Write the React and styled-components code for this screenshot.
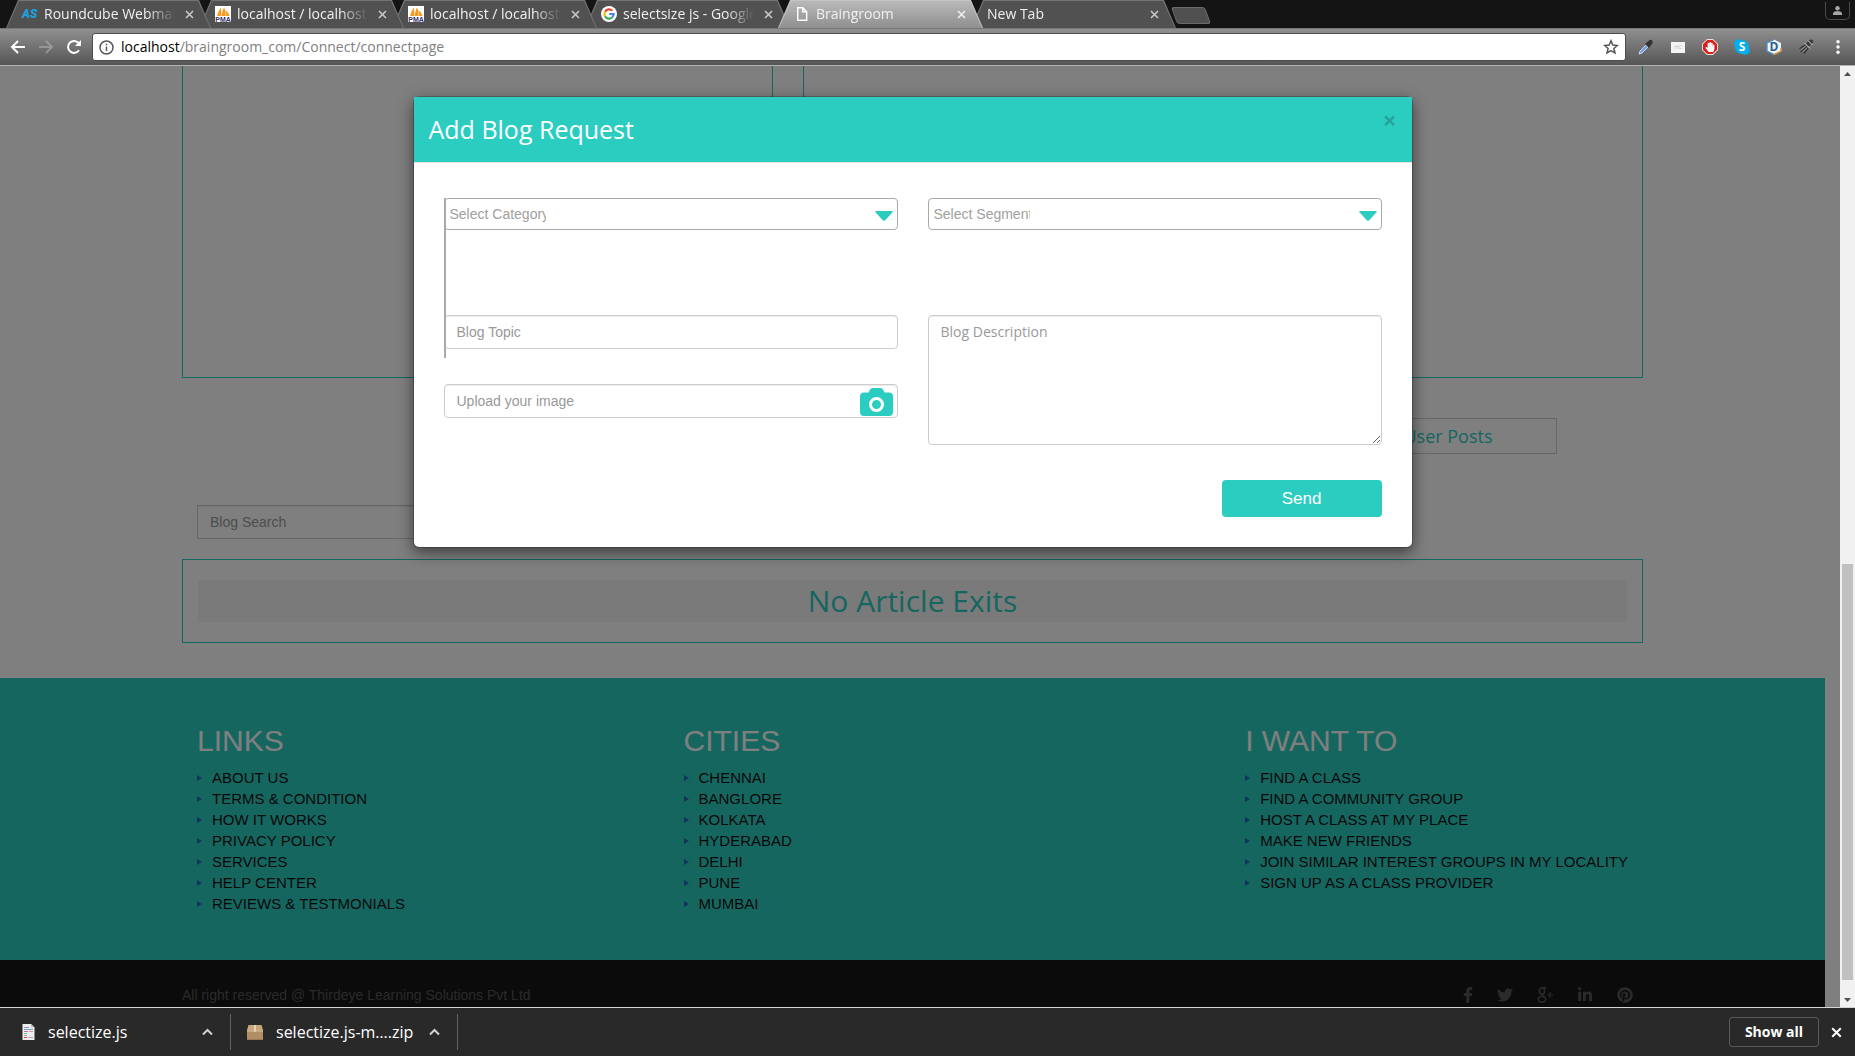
import React from "react";
import styled, { createGlobalStyle, css } from "styled-components";
import { FaFacebookF, FaTwitter, FaLinkedinIn, FaPinterest, FaHandPaper } from "react-icons/fa";

const TEAL = "#2ccdc1";
const UI = `"Open Sans", "Noto Sans", sans-serif`;
const BODY = `"Liberation Sans", Arial, sans-serif`;

const GlobalStyle = createGlobalStyle`
  *, *::before, *::after { box-sizing: border-box; }
  body { margin: 0; background: #808080; font-family: ${BODY}; font-size: 14px; line-height: 20px; }
  button, input, select, textarea { font: inherit; margin: 0; }
  button { border: 0; padding: 0; background: none; color: inherit; cursor: pointer; }
  svg { display: block; }
  a { color: inherit; text-decoration: none; }
  h2, h3, ul, p { margin: 0; padding: 0; font-weight: 400; }
`;

/* ---------- browser window ---------- */
const Window = styled.div`
  display: grid;
  grid-template-rows: auto auto 1fr auto;
  height: 100vh;
  overflow: hidden;
`;

const TabStrip = styled.div`
  display: flex;
  height: 28px;
  padding-left: 6px;
  background: #141414;
`;

const Tab = styled.div`
  position: relative;
  isolation: isolate;
  z-index: ${(p) => (p.$active ? 9 : p.$order)};
  display: flex;
  align-items: center;
  width: 205px;
  margin-right: -12px;
  padding: 0 17px 0 16px;
  color: #f0f0f0;
  font: 14px/28px ${UI};

  &::before, &::after {
    content: "";
    position: absolute;
    z-index: -1;
    inset: 0;
    clip-path: polygon(0 100%, 12px 0, calc(100% - 12px) 0, 100% 100%);
    background: ${(p) => (p.$active ? "#c4c4c4" : "#737373")};
  }
  &::after {
    inset: 1px 1px 0;
    background: ${(p) => (p.$active ? "linear-gradient(#b9b9b9, #8f8f8f)" : "#515151")};
  }
`;

const Favicon = styled.span`
  flex: none;
  width: 16px;
  height: 16px;
  margin-right: 6px;
`;

const LogoText = styled.span`
  display: block;
  color: #1ba3e0;
  font: italic 900 12px/16px Roboto, sans-serif;
`;

const TabTitle = styled.span`
  flex: 1;
  overflow: hidden;
  white-space: nowrap;
  mask-image: linear-gradient(90deg, #000 calc(100% - 28px), transparent);
`;

const TabClose = styled.button`
  flex: none;
  margin-left: 10px;
  color: ${(p) => (p.$active ? "#eee" : "#c8c8c8")};
`;

const NewTab = styled.button`
  width: 34px;
  height: 17px;
  margin: 7px 0 0 10px;
  border: 1px solid #6a6a6a;
  border-radius: 3px;
  background: #505050;
  transform: skewX(20deg);
`;

const UserBox = styled.button`
  display: grid;
  place-items: center;
  width: 25px;
  height: 18px;
  margin: 2px 5px 0 auto;
  border: 1px solid #4a4a4a;
  border-top: 0;
  border-radius: 0 0 5px 5px;
  color: #a8a8a8;
`;

const Toolbar = styled.div`
  display: flex;
  align-items: center;
  height: 38px;
  padding: 0 9px 0 10px;
  border-top: 1px solid #777;
  border-bottom: 1px solid #b4b4b4;
  background: linear-gradient(#909090, #555);
`;

const NavButtons = styled.div`
  display: flex;
  gap: 12px;
  margin-right: 10px;
`;

const IconButton = styled.button`
  display: grid;
  place-items: center;
  width: 16px;
  height: 16px;
  color: #fff;
  opacity: ${(p) => (p.$faded ? 0.25 : 1)};
`;

const AddressBar = styled.div`
  flex: 1;
  display: flex;
  align-items: center;
  gap: 7px;
  height: 28px;
  padding: 0 6px;
  border: 1px solid #4c4c4c;
  border-radius: 3px;
  background: #fff;
  color: #5a5a5a;
`;

const Url = styled.span`
  flex: 1;
  color: #808080;
  font: 14px/26px ${UI};
  b { color: #000; font-weight: 400; }
`;

const Extensions = styled.div`
  display: flex;
  gap: 16px;
  margin-left: 12px;
`;

const HcBadge = styled.span`
  width: 14px;
  height: 11px;
  background: #f4f4f4;
  color: #bbb;
  font: 6px/11px ${UI};
  text-align: center;
`;

/* ---------- page viewport ---------- */
const Viewport = styled.div`
  position: relative;
  display: flex;
  min-height: 0;
  overflow: hidden;
`;

const Page = styled.div`
  flex: 1;
  min-width: 0;
  padding-right: 15px;
  background: #fff;
`;

const Container = styled.div`
  width: calc(80% + 1px);
  margin: 0 auto;
`;

const Panels = styled.div`
  display: grid;
  grid-template-columns: repeat(12, 1fr);
  gap: 30px;
`;

const Panel = styled.div`
  grid-column: span ${(p) => p.$span};
  height: 312px;
  border: 1px solid ${TEAL};
  border-top: 0;
`;

const PostTabs = styled.div`
  display: flex;
  justify-content: flex-end;
  margin-top: 40px;
  padding-right: 86px;
`;

const PostTab = styled.button`
  width: 218px;
  height: 36px;
  border: 1px solid #ccc;
  color: ${TEAL};
  font: 18px/34px ${UI};
`;

const SearchRow = styled.div`
  margin-top: 51px;
  padding-left: 15px;
`;

const fieldLook = css`
  display: block;
  width: 100%;
  height: 34px;
  padding: 6px 12px;
  border: 1px solid #ccc;
  border-radius: 4px;
  background: #fff;
  box-shadow: inset 0 1px 1px rgba(0, 0, 0, 0.075);
  color: #999;
  outline: 0;
  &::placeholder { color: #999; opacity: 1; }
`;

const SearchInput = styled.input`
  ${fieldLook}
  width: 33%;
  border-radius: 0;
`;

const ArticleBox = styled.section`
  margin: 20px 0 35px;
  padding: 20px 15px;
  border: 1px solid ${TEAL};
`;

const ArticleNote = styled.h2`
  background: #f4f4f4;
  color: ${TEAL};
  font: 30px/42px ${UI};
  text-align: center;
`;

const FooterLinks = styled.footer`
  padding: 46px 0;
  background: ${TEAL};
`;

const LinkColumns = styled(Container)`
  display: grid;
  grid-template-columns: 34% 1fr auto;
  padding: 0 15px;
`;

const ColumnTitle = styled.h3`
  margin-bottom: 10px;
  color: #fff;
  font-size: 30px;
  line-height: 33px;
`;

const LinkList = styled.ul`
  list-style: none;
  color: #111;
  font-size: 15px;
  line-height: 21px;
`;

const LinkItem = styled.li`
  display: flex;
  align-items: center;
  gap: 10px;
  &::before {
    content: "";
    border-left: 5px solid #2068b8;
    border-top: 3px solid transparent;
    border-bottom: 3px solid transparent;
  }
`;

const Copyright = styled.div`
  height: 80px;
  padding-top: 25px;
  background: #161616;
  color: #555;
`;

const CopyrightRow = styled(Container)`
  display: flex;
  justify-content: space-between;
  padding-right: 10px;
`;

const Social = styled.div`
  display: flex;
  align-items: center;
  gap: 24px;
`;

const SlimFacebook = styled(FaFacebookF)`
  width: 10px;
`;

const Scrollbar = styled.div`
  position: relative;
  z-index: 3;
  display: flex;
  flex-direction: column;
  align-items: center;
  width: 15px;
  background: #f1f1f1;
  color: #505050;
`;

const ScrollArrow = styled.button`
  display: grid;
  place-items: center;
  width: 15px;
  height: 15px;
`;

const ScrollGap = styled.div`
  flex: ${(p) => p.$share};
`;

const ScrollThumb = styled.div`
  flex: 416;
  width: 11px;
  background: #c1c1c1;
`;

/* ---------- modal ---------- */
const Backdrop = styled.div`
  position: absolute;
  inset: 0 15px 0 0;
  z-index: 1;
  padding: 30px 15px 0 0;
  background: rgba(0, 0, 0, 0.5);
`;

const Dialog = styled.div`
  max-width: 1000px;
  margin: 0 auto;
  border: 1px solid rgba(0, 0, 0, 0.2);
  border-radius: 6px;
  background: #fff;
  background-clip: padding-box;
  box-shadow: 0 5px 15px rgba(0, 0, 0, 0.5);
`;

const DialogHeader = styled.header`
  display: flex;
  justify-content: space-between;
  align-items: flex-start;
  height: 66px;
  padding: 15px;
  border-bottom: 1px solid #e5e5e5;
  background: ${TEAL};
  background-clip: padding-box;
`;

const DialogTitle = styled.h2`
  color: #fff;
  font: 25px/35px ${UI};
`;

const DialogClose = styled.button`
  color: #000;
  font: 700 24px/16px ${UI};
  opacity: 0.2;
`;

const Form = styled.form`
  padding: 35px 30px 30px;
`;

const Fields = styled.div`
  display: grid;
  grid-template-columns: 1fr 1fr;
  gap: 85px 30px;
`;

const Stack = styled.div`
  display: flex;
  flex-direction: column;
  gap: 35px;
`;

const SelectBox = styled.div`
  position: relative;
  ${(p) => p.$bar && css`
    &::before {
      content: "";
      position: absolute;
      z-index: 1;
      top: 0;
      left: 0;
      width: 2px;
      height: 160px;
      background: #a9a9a9;
    }
  `}
`;

const Select = styled.select`
  display: block;
  appearance: none;
  width: 100%;
  height: 32px;
  padding: 0 calc(100% - 103px) 0 5px;
  border: 1px solid #a9a9a9;
  border-radius: 4px;
  background: #fff;
  color: #a0a0a0;
`;

const SelectArrow = styled.svg`
  position: absolute;
  top: 13px;
  right: 5px;
  pointer-events: none;
`;

const TextInput = styled.input`
  ${fieldLook}
`;

const TextArea = styled.textarea`
  ${fieldLook}
  height: 130px;
  font-family: ${UI};
  resize: both;
`;

const Upload = styled.label`
  ${fieldLook}
  display: flex;
  align-items: center;
  justify-content: space-between;
  padding: 0 4px 0 12px;
`;

const HiddenFile = styled.input`
  position: absolute;
  width: 1px;
  height: 1px;
  opacity: 0;
`;

const Actions = styled.div`
  display: flex;
  justify-content: flex-end;
  margin-top: 35px;
`;

const SendButton = styled.button`
  width: 160px;
  height: 37px;
  border-radius: 4px;
  background: ${TEAL};
  color: #fff;
  font-size: 17px;
`;

/* ---------- download shelf ---------- */
const Shelf = styled.div`
  display: flex;
  align-items: center;
  height: 49px;
  padding-right: 11px;
  border-top: 1px solid #d4d4d4;
  background: #292929;
  color: #fff;
  font: 16px/20px ${UI};
`;

const Download = styled.div`
  display: flex;
  align-items: center;
  width: ${(p) => p.$width}px;
  height: 36px;
  padding: 0 17px 0 ${(p) => p.$indent}px;
  border-right: 1px solid #606060;
  white-space: nowrap;
`;

const DownloadName = styled.span`
  flex: 1;
  margin-left: 13px;
`;

const ShowAll = styled.button`
  width: 90px;
  height: 30px;
  margin: 0 9px 0 auto;
  border: 1px solid #5a5a5a;
  border-radius: 3px;
  color: #fff;
  font: 700 14px/26px ${UI};
`;

/* ---------- drawings ---------- */
const Cross = ({ size = 9, weight = 2 }) => (
  <svg width={size} height={size} viewBox="0 0 9 9" stroke="currentColor" strokeWidth={weight}>
    <path d="M1 1l7 7M8 1l-7 7" />
  </svg>
);

const PmaIcon = () => (
  <svg width="16" height="16" viewBox="0 0 16 16">
    <rect width="16" height="16" fill="#fff" />
    <path d="M2 10C3 7 4 4 6 1.500L6.500 10zM7 10c0-3 .5-6 2-8.500 1.500 2.500 1.700 5.500 1.500 8.500zM11 10c.3-2 .2-4-.5-6 2 1.500 3.500 4 4 6z" fill="#f7981d" />
    <text x="8" y="16" textAnchor="middle" fontFamily="Liberation Sans" fontWeight="700" fontSize="7" fill="#34346b">PMA</text>
  </svg>
);

const GoogleIcon = () => (
  <svg width="16" height="16" viewBox="0 0 16 16">
    <circle cx="8" cy="8" r="8" fill="#fff" />
    <g fill="none" strokeWidth="2.200">
      <path d="M4 5.700A4.600 4.600 0 0 1 11.300 4.800" stroke="#ea4335" />
      <path d="M4 5.700a4.600 4.600 0 0 0 0 4.600" stroke="#fbbc05" />
      <path d="M4 10.300a4.600 4.600 0 0 0 7 1.200" stroke="#34a853" />
      <path d="M11 11.500A4.600 4.600 0 0 0 12.600 8H8.200" stroke="#4285f4" />
    </g>
  </svg>
);

const PageIcon = () => (
  <svg width="16" height="16" viewBox="0 0 16 16" fill="none" stroke="#fff" strokeWidth="1.400">
    <path d="M3.700 1.700h5l4 4v8.600h-9zM8.700 1.700v4h4" />
  </svg>
);

const UserIcon = () => (
  <svg width="9" height="9" viewBox="0 0 9 9" fill="currentColor">
    <circle cx="4.500" cy="2.300" r="2.200" />
    <path d="M0 9V7.500C0 5.900 2 5.300 4.500 5.300S9 5.900 9 7.500V9z" />
  </svg>
);

const ArrowIcon = ({ flip }) => (
  <svg width="16" height="16" viewBox="0 0 16 16" fill="none" stroke="currentColor" strokeWidth="2">
    <path d={flip ? "M1 8h13M8 2l6 6-6 6" : "M15 8H2M8 2L2 8l6 6"} />
  </svg>
);

const ReloadIcon = () => (
  <svg width="16" height="16" viewBox="0 0 16 16">
    <path d="M13 11.300A6 6 0 1 1 12.600 4" fill="none" stroke="currentColor" strokeWidth="2" />
    <path d="M15 1v6H9z" fill="currentColor" />
  </svg>
);

const InfoIcon = () => (
  <svg width="15" height="15" viewBox="0 0 15 15" fill="none" stroke="currentColor" strokeWidth="1.500">
    <circle cx="7.500" cy="7.500" r="6.500" />
    <path d="M7.500 6.500v4.500M7.500 3.700v1.600" />
  </svg>
);

const StarIcon = () => (
  <svg width="16" height="16" viewBox="0 0 16 16" fill="none" stroke="#555" strokeWidth="1.500">
    <path d="M8 1.800l1.800 4.300 4.600.4-3.500 3 1.100 4.500-4-2.400L4 14l1.100-4.500-3.500-3 4.600-.4z" />
  </svg>
);

const DropperIcon = () => (
  <svg width="16" height="16" viewBox="0 0 16 16">
    <path d="M1 15l1-3 6-6 2 2-6 6z" fill="#6f9fe8" stroke="#dfe8f5" strokeWidth=".8" />
    <path d="M7 5l4-3.500c2-2 5 .8 3.200 3L11 9z" fill="#333" />
  </svg>
);

const BlockIcon = () => (
  <svg width="16" height="16" viewBox="0 0 16 16">
    <path d="M5 0h6l5 5v6l-5 5H5l-5-5V5z" fill="#f3dcdc" />
    <path d="M5.300 1h5.400L15 5.300v5.400L10.700 15H5.300L1 10.700V5.300z" fill="#d8201c" />
    <FaHandPaper x="3" y="3" size="10" color="#fff" />
  </svg>
);

const SkypeIcon = () => (
  <svg width="16" height="16" viewBox="0 0 16 16">
    <circle cx="8" cy="8" r="7" fill="#00aff0" />
    <circle cx="4.500" cy="4.500" r="4.300" fill="#00aff0" />
    <circle cx="11.500" cy="11.500" r="4.300" fill="#00aff0" />
    <text x="8" y="12.200" textAnchor="middle" fontFamily="Open Sans" fontWeight="700" fontSize="12" fill="#fff">S</text>
  </svg>
);

const HexIcon = () => (
  <svg width="16" height="16" viewBox="0 0 16 16">
    <path d="M8 .5L15 4v8l-7 3.500L1 12V4z" fill="#eef3f7" />
    <path d="M8 .5L1 4v8l7 3.500" fill="none" stroke="#4d8fc4" strokeWidth="1.300" />
    <path d="M15 9v3l-7 3.500" fill="none" stroke="#e39a45" strokeWidth="1.500" />
    <text x="8" y="12.200" textAnchor="middle" fontFamily="Open Sans" fontWeight="700" fontSize="12" fill="#2a5f8f">D</text>
  </svg>
);

const BrushIcon = () => (
  <svg width="16" height="16" viewBox="0 0 16 16" strokeLinecap="round">
    <path d="M10 5.500l3-3" stroke="#3a3a3a" strokeWidth="4" />
    <path d="M2 9.500l5-3.500M3 12.500l5.500-5M6 14l4-5" stroke="#2e2e2e" strokeWidth="1.300" />
    <path d="M3 11l4.500-3.500M5 13l4-4" stroke="#b5b5b5" strokeWidth=".7" />
    <path d="M7 4.500l4.500 4.500M10.500 2l3.500 3.500" stroke="#ddd" strokeWidth="1" />
  </svg>
);

const DotsIcon = () => (
  <svg width="16" height="16" viewBox="0 0 16 16" fill="currentColor">
    <circle cx="8" cy="2.800" r="1.700" /><circle cx="8" cy="8" r="1.700" /><circle cx="8" cy="13.200" r="1.700" />
  </svg>
);

const CameraIcon = () => (
  <svg width="33" height="30" viewBox="0 -2 33 30">
    <path d="M4 4.500h4.500L10 1.500Q11 0 12.500 0h8Q22 0 23 1.500l1.500 3H29q4 0 4 4V24q0 4-4 4H4q-4 0-4-4V8.500q0-4 4-4z" fill={TEAL} />
    <circle cx="16.500" cy="16.500" r="6" fill="none" stroke="#fff" strokeWidth="3" />
  </svg>
);

const GooglePlusIcon = () => (
  <svg width="16" height="16" viewBox="0 0 16 16" fill="none" stroke="currentColor">
    <ellipse cx="5" cy="4" rx="2.600" ry="3.300" strokeWidth="1.600" />
    <path d="M5 .7h4.500M6 7.200c-1.500 1 .3 1.700 1.300 2.600" strokeWidth="1.400" />
    <ellipse cx="5" cy="12.300" rx="3.700" ry="2.800" strokeWidth="1.600" />
    <path d="M13 5v6M10.200 8H16" strokeWidth="1.200" />
  </svg>
);

const ScriptIcon = () => (
  <svg width="13" height="16" viewBox="0 0 13 16">
    <path d="M.5 0H9l3.500 3.500V16H.5z" fill="#eee" />
    <path d="M9 0l3.500 3.500H9z" fill="#bbb" />
    <g strokeWidth="1">
      <path d="M2 3.500h5M2 5.500h9" stroke="#7f9fc4" />
      <path d="M2 7.500h4" stroke="#b06fc0" />
      <path d="M7 7.500h4" stroke="#d69a8a" />
      <path d="M2 9.500h3" stroke="#7dc0a0" />
      <path d="M2 11.500h3M6 13.500h5" stroke="#aaa" />
      <path d="M2 13.500h3" stroke="#e33" />
    </g>
  </svg>
);

const BoxIcon = () => (
  <svg width="16" height="15" viewBox="0 0 16 15">
    <path d="M1.500 0h13L16 5v9.500H0V5z" fill="#c7a77c" />
    <path d="M0 5.500h16V14.500H0z" fill="#b18f63" />
    <path d="M7 0h2v7H7z" fill="#e6d3b3" />
    <path d="M0 6h16" stroke="#d8bf98" />
  </svg>
);

const Chevron = () => (
  <svg width="11" height="8" viewBox="0 0 11 8" fill="none" stroke="#d0d0d0" strokeWidth="2">
    <path d="M1 6.500L5.500 2 10 6.500" />
  </svg>
);

const Wedge = ({ down }) => (
  <svg width="7" height="4" viewBox="0 0 7 4" fill="currentColor">
    <path d={down ? "M0 0h7L3.500 4z" : "M0 4h7L3.500 0z"} />
  </svg>
);

/* ---------- data ---------- */
const tabs = [
  { title: "Roundcube Webmail", icon: <LogoText>AS</LogoText> },
  { title: "localhost / localhost", icon: <PmaIcon /> },
  { title: "localhost / localhost", icon: <PmaIcon /> },
  { title: "selectsize js - Google", icon: <GoogleIcon /> },
  { title: "Braingroom", icon: <PageIcon />, active: true },
  { title: "New Tab" },
];

const columns = [
  ["LINKS", ["ABOUT US", "TERMS & CONDITION", "HOW IT WORKS", "PRIVACY POLICY", "SERVICES", "HELP CENTER", "REVIEWS & TESTMONIALS"]],
  ["CITIES", ["CHENNAI", "BANGLORE", "KOLKATA", "HYDERABAD", "DELHI", "PUNE", "MUMBAI"]],
  ["I WANT TO", ["FIND A CLASS", "FIND A COMMUNITY GROUP", "HOST A CLASS AT MY PLACE", "MAKE NEW FRIENDS", "JOIN SIMILAR INTEREST GROUPS IN MY LOCALITY", "SIGN UP AS A CLASS PROVIDER"]],
];

const BrowserTop = () => (
  <>
    <TabStrip>
      {tabs.map((t, i) => (
        <Tab key={i} $active={t.active} $order={8 - i}>
          {t.icon && <Favicon>{t.icon}</Favicon>}
          <TabTitle>{t.title}</TabTitle>
          <TabClose $active={t.active} aria-label="Close tab"><Cross weight={1.6} /></TabClose>
        </Tab>
      ))}
      <NewTab aria-label="New tab" />
      <UserBox aria-label="Profile"><UserIcon /></UserBox>
    </TabStrip>
    <Toolbar>
      <NavButtons>
        <IconButton aria-label="Back"><ArrowIcon /></IconButton>
        <IconButton aria-label="Forward" $faded><ArrowIcon flip /></IconButton>
        <IconButton aria-label="Reload"><ReloadIcon /></IconButton>
      </NavButtons>
      <AddressBar>
        <InfoIcon />
        <Url><b>localhost</b>/braingroom_com/Connect/connectpage</Url>
        <StarIcon />
      </AddressBar>
      <Extensions>
        <IconButton aria-label="Colour picker"><DropperIcon /></IconButton>
        <IconButton aria-label="Contrast"><HcBadge>HC</HcBadge></IconButton>
        <IconButton aria-label="Blocker"><BlockIcon /></IconButton>
        <IconButton aria-label="Skype"><SkypeIcon /></IconButton>
        <IconButton aria-label="Inspector"><HexIcon /></IconButton>
        <IconButton aria-label="Cleaner"><BrushIcon /></IconButton>
        <IconButton aria-label="Menu"><DotsIcon /></IconButton>
      </Extensions>
    </Toolbar>
  </>
);

const BlogPage = () => (
  <Page>
    <Container>
      <Panels>
        <Panel $span={5} />
        <Panel $span={7} />
      </Panels>
      <PostTabs><PostTab>User Posts</PostTab></PostTabs>
      <SearchRow><SearchInput aria-label="Blog Search" placeholder="Blog Search" /></SearchRow>
      <ArticleBox><ArticleNote>No Article Exits</ArticleNote></ArticleBox>
    </Container>
    <FooterLinks>
      <LinkColumns>
        {columns.map(([title, items]) => (
          <div key={title}>
            <ColumnTitle>{title}</ColumnTitle>
            <LinkList>
              {items.map((item) => <LinkItem key={item}><a href="#">{item}</a></LinkItem>)}
            </LinkList>
          </div>
        ))}
      </LinkColumns>
    </FooterLinks>
    <Copyright>
      <CopyrightRow>
        <p>All right reserved @ Thirdeye Learning Solutions Pvt Ltd</p>
        <Social>
          <a href="#" aria-label="Facebook"><SlimFacebook size={16} /></a>
          <a href="#" aria-label="Twitter"><FaTwitter size={16} /></a>
          <a href="#" aria-label="Google Plus"><GooglePlusIcon /></a>
          <a href="#" aria-label="LinkedIn"><FaLinkedinIn size={16} /></a>
          <a href="#" aria-label="Pinterest"><FaPinterest size={16} /></a>
        </Social>
      </CopyrightRow>
    </Copyright>
  </Page>
);

const DropDown = ({ label, bar }) => (
  <SelectBox $bar={bar}>
    <Select aria-label={label}><option>{label}</option></Select>
    <SelectArrow width="18" height="10" viewBox="0 0 18 10">
      <path d="M1 0h16q1.500 0 .5 1.200L10.500 9Q9 10.600 7.500 9L.5 1.200Q-.5 0 1 0z" fill={TEAL} />
    </SelectArrow>
  </SelectBox>
);

const BlogDialog = () => (
  <Backdrop>
    <Dialog role="dialog" aria-labelledby="dialog-title">
      <DialogHeader>
        <DialogTitle id="dialog-title">Add Blog Request</DialogTitle>
        <DialogClose aria-label="Close">×</DialogClose>
      </DialogHeader>
      <Form onSubmit={(e) => e.preventDefault()}>
        <Fields>
          <DropDown label="Select Category" bar />
          <DropDown label="Select Segment" />
          <Stack>
            <TextInput aria-label="Blog Topic" placeholder="Blog Topic" />
            <Upload>
              Upload your image
              <CameraIcon />
              <HiddenFile type="file" />
            </Upload>
          </Stack>
          <TextArea aria-label="Blog Description" placeholder="Blog Description" />
        </Fields>
        <Actions><SendButton type="submit">Send</SendButton></Actions>
      </Form>
    </Dialog>
  </Backdrop>
);

export default function App() {
  return (
    <Window>
      <GlobalStyle />
      <BrowserTop />
      <Viewport>
        <BlogPage />
        <BlogDialog />
        <Scrollbar>
          <ScrollArrow aria-label="Scroll up"><Wedge /></ScrollArrow>
          <ScrollGap $share={482} />
          <ScrollThumb />
          <ScrollGap $share={12} />
          <ScrollArrow aria-label="Scroll down"><Wedge down /></ScrollArrow>
        </Scrollbar>
      </Viewport>
      <Shelf>
        <Download $width={231} $indent={22}>
          <ScriptIcon />
          <DownloadName>selectize.js</DownloadName>
          <Chevron />
        </Download>
        <Download $width={227} $indent={16}>
          <BoxIcon />
          <DownloadName>selectize.js-m….zip</DownloadName>
          <Chevron />
        </Download>
        <ShowAll>Show all</ShowAll>
        <IconButton aria-label="Close downloads"><Cross size={11} weight={1.6} /></IconButton>
      </Shelf>
    </Window>
  );
}
